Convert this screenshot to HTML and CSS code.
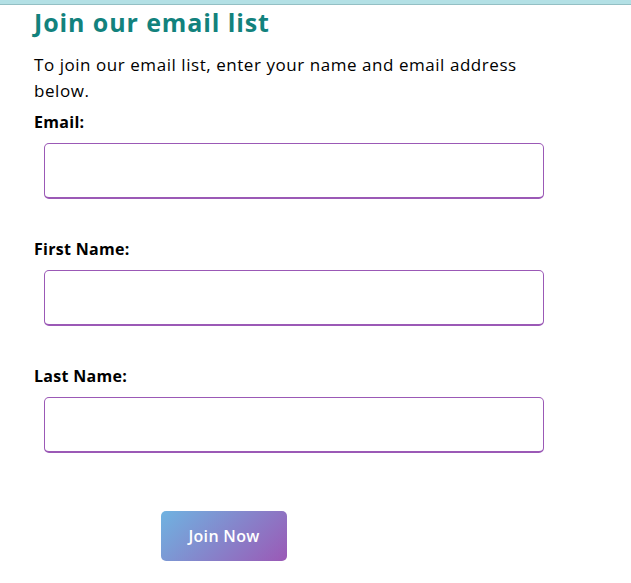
FILE: index.html
```html
<!DOCTYPE html>
<html lang="en">
<head>
<meta charset="utf-8">
<title>Join our email list</title>
<link rel="stylesheet" href="styles.css">
</head>
<body>
<div class="topbar"></div>
<main class="content">
  <h1 class="title">Join our email list</h1>
  <p class="intro">To join our email list, enter your name and email address below.</p>
  <form class="form">
    <div class="field">
      <label class="label" for="email">Email:</label>
      <input class="input" id="email" type="email">
    </div>
    <div class="field">
      <label class="label" for="first">First Name:</label>
      <input class="input" id="first" type="text">
    </div>
    <div class="field">
      <label class="label" for="last">Last Name:</label>
      <input class="input" id="last" type="text">
    </div>
    <div class="actions">
      <button class="btn" type="button">Join Now</button>
    </div>
  </form>
</main>
</body>
</html>
```
FILE: styles.css
```css
html, body {
  margin: 0;
  padding: 0;
  background: #fff;
}
body {
  font-family: "Open Sans", "Liberation Sans", sans-serif;
  color: #000;
}
.topbar {
  height: 4px;
  background: #b3e0e5;
  border-bottom: 1px solid #93bfc4;
}
.content {
  padding: 0 34px;
}
.title {
  margin: 1px 0 0;
  font-size: 25px;
  font-weight: 700;
  color: #12827d;
  line-height: 32px;
  letter-spacing: 0.9px;
}
.intro {
  margin: 14px 0 7px;
  width: 500px;
  font-size: 17px;
  line-height: 26px;
  letter-spacing: 0.55px;
}
.form {
  display: flex;
  flex-direction: column;
}
.field {
  display: flex;
  flex-direction: column;
  margin-bottom: 39px;
}
.label {
  font-size: 16px;
  font-weight: 700;
  line-height: 22px;
  letter-spacing: 0.3px;
}
.input {
  margin: 10px 0 0 10px;
  width: 500px;
  height: 56px;
  box-sizing: border-box;
  border: 1px solid #9b59b6;
  border-bottom-width: 2px;
  border-radius: 5px;
  background: #fff;
  outline: none;
}
.actions {
  display: flex;
  padding-left: 127px;
  margin-top: 19px;
}
.btn {
  width: 126px;
  height: 50px;
  border: none;
  border-radius: 5px;
  background: linear-gradient(135deg, #6fb3e1 0%, #9b59b6 100%);
  color: #fff;
  font-family: "Open Sans", "Liberation Sans", sans-serif;
  font-size: 16px;
  font-weight: 600;
  letter-spacing: 0.3px;
}
```
